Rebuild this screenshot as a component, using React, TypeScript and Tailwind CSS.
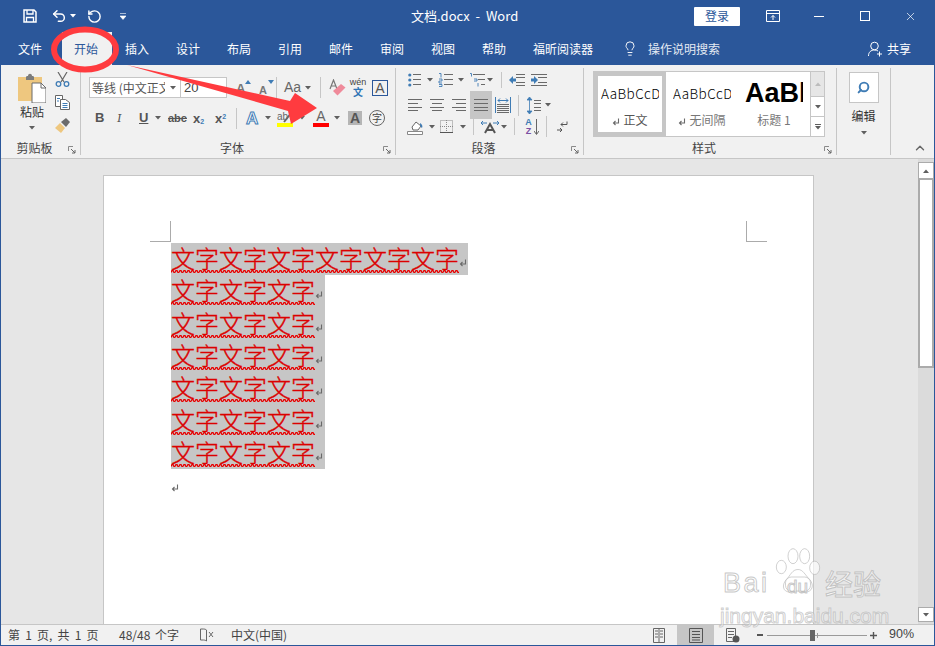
import { ChevronUp, Lightbulb, RotateCcw, Search, Undo2, X } from 'lucide-react'

const cjk = '[font-family:"Noto_Sans_CJK_SC","Liberation_Sans",sans-serif]'

const tabs = ['插入', '设计', '布局', '引用', '邮件', '审阅', '视图', '帮助']

const Caret = ({ className = '' }: { className?: string }) => (
  <svg viewBox="0 0 6 4" className={`w-[6px] h-[4px] shrink-0 ${className}`}>
    <path d="M0 0h6L3 3.5z" fill="#5f5f5f" />
  </svg>
)

const Sep = ({ className = '' }: { className?: string }) => (
  <div className={`w-px bg-[#c6c6c6] shrink-0 ${className}`} />
)

const Launcher = () => (
  <svg viewBox="0 0 8 8" className="w-[8px] h-[8px]">
    <path d="M0.5 5V0.5H5" fill="none" stroke="#8a8a8a" />
    <path d="M3 3l4 4M7 4v3H4" fill="none" stroke="#666" />
  </svg>
)

const Mark = ({ className = '' }: { className?: string }) => (
  <svg viewBox="0 0 8 8" className={`w-[8px] h-[8px] ${className}`}>
    <path d="M6.5 0.5v4.5H1.5M3.5 3L1.5 5l2 2" fill="none" stroke="#6a6a6a" strokeWidth="1.1" />
  </svg>
)

const Lines = ({ rows, x1 = 0, x2 = 14 }: { rows: number[]; x1?: number; x2?: number }) => (
  <>
    {rows.map((y) => (
      <path key={y} d={`M${x1} ${y}.5H${x2}`} stroke="#6a6a6a" />
    ))}
  </>
)

const Align = ({ kind }: { kind: 'l' | 'c' | 'r' | 'j' }) => {
  const short = kind === 'l' ? [0, 10] : kind === 'c' ? [2, 12] : kind === 'r' ? [4, 14] : [0, 14]
  return (
    <svg viewBox="0 0 14 12" className="w-[14px] h-[12px] shrink-0">
      <path d="M0 0.5H14M0 8.5H14" stroke="#6a6a6a" />
      <path d={`M${short[0]} 4.5H${short[1]}M${short[0]} 11.5H${short[1]}`} stroke="#6a6a6a" />
    </svg>
  )
}

const Group = ({
  width,
  label,
  children,
}: {
  width: string
  label: string
  children: React.ReactNode
}) => (
  <div className={`${width} shrink-0 border-r border-[#c6c6c6] flex flex-col`}>
    <div className="flex-1 min-h-0">{children}</div>
    <div className="h-[17px] flex items-center pt-[2px]">
      <div className={`flex-1 text-center text-[12px] leading-none text-[#444] ${cjk}`}>{label}</div>
      <div className="mr-[4px] mt-[5px]">
        <Launcher />
      </div>
    </div>
  </div>
)

// spell-check squiggle under a run of text
const Squiggle = ({ id }: { id: string }) => (
  <svg className="block w-full h-[3px]">
    <defs>
      <pattern id={id} width="4" height="3" patternUnits="userSpaceOnUse">
        <path d="M0 2.5L1 0.5 2 0.5 3 2.5 4 2.5" fill="none" stroke="#e80000" strokeWidth="1.3" />
      </pattern>
    </defs>
    <rect width="100%" height="3" fill={`url(#${id})`} />
  </svg>
)

const Line = ({ wide, tall, id }: { wide?: boolean; tall?: boolean; id: string }) => (
  <div className={`${wide ? 'w-[297px]' : 'w-[154px]'} ${tall ? 'h-[33px]' : 'h-[32px]'} bg-[#c6c6c6] flex items-start`}>
    <div className={`${wide ? 'w-[288px]' : 'w-[144px]'} pt-[2px]`}>
      <div className={`whitespace-nowrap text-[24px] leading-[25px] font-light text-[#dc0000] [-webkit-text-stroke:0.35px_#dc0000] ${cjk}`}>
        {wide ? '文字文字文字文字文字文字' : '文字文字文字'}
      </div>
      <Squiggle id={id} />
    </div>
    <Mark className="mt-[16px]" />
  </div>
)

export default function App() {
  return (
    <div className={`relative w-[935px] h-[646px] overflow-hidden bg-[#2b579a] px-px pb-px flex flex-col ${cjk}`}>
      {/* title bar */}
      <div className="h-[32px] flex items-center text-white shrink-0">
        <svg viewBox="0 0 14 14" className="w-[14px] h-[14px] ml-[22px]">
          <path d="M1 1h10l2 2v10H1z" fill="none" stroke="#fff" strokeWidth="1.5" />
          <path d="M4 1v4h6V1M3.5 13V8.5h7V13" fill="none" stroke="#fff" strokeWidth="1.3" />
        </svg>
        <Undo2 className="w-[16px] h-[16px] ml-[14px]" strokeWidth={2.2} />
        <svg viewBox="0 0 6 4" className="w-[6px] h-[4px] ml-[3px]">
          <path d="M0 0h6L3 3.5z" fill="#fff" />
        </svg>
        <RotateCcw className="w-[15px] h-[15px] ml-[11px]" strokeWidth={2.3} />
        <svg viewBox="0 0 6 7" className="w-[6px] h-[7px] ml-[18px]">
          <path d="M0 0.5h6M0 3h6L3 6.5z" fill="#fff" stroke="#fff" strokeWidth="0.6" />
        </svg>
        <span className="w-[108px] ml-[285px] text-[13px] whitespace-nowrap">文档.docx&nbsp; - &nbsp;Word</span>
        <div className="ml-[175px] w-[46px] h-[19px] bg-white rounded-[1px] text-[#2b579a] text-[12px] flex items-center justify-center">
          登录
        </div>
        <svg viewBox="0 0 14 12" className="w-[14px] h-[12px] ml-[26px]">
          <path d="M0.5 0.5h13v11H0.5zM0.5 3.5h13M7 10V5.5M5 7.5l2-2 2 2" fill="none" stroke="#fff" />
        </svg>
        <div className="w-[10px] h-px bg-white ml-[34px]" />
        <div className="w-[10px] h-[10px] border border-white ml-[36px]" />
        <X className="w-[13px] h-[13px] ml-[34px]" strokeWidth={1.3} />
      </div>

      {/* tabs */}
      <div className="h-[33px] flex items-center text-white text-[12px] shrink-0">
        <div className="w-[61px] pl-[17px]">文件</div>
        <div className="w-[50px] h-full bg-[#f1f1f1] text-[#2b579a] flex items-center justify-center pr-[2px]">开始</div>
        {tabs.map((t) => (
          <div key={t} className="w-[51px] pl-[13px]">
            {t}
          </div>
        ))}
        <div className="w-[102px] pl-[13px] whitespace-nowrap">福昕阅读器</div>
        <Lightbulb className="w-[16px] h-[17px]" strokeWidth={1.4} />
        <span className="ml-[10px] w-[73px] whitespace-nowrap text-[#e4eaf3]">操作说明搜索</span>
        <svg viewBox="0 0 15 16" className="w-[15px] h-[16px] ml-[147px]">
          <circle cx="6.5" cy="5" r="3.8" fill="none" stroke="#fff" />
          <path d="M0.5 15c0-4 2.5-6 6-6 1.5 0 2.5.4 3.5 1M11.5 10.5v5M9 13h5" fill="none" stroke="#fff" />
        </svg>
        <span className="ml-[4px]">共享</span>
      </div>

      {/* ribbon */}
      <div className="h-[94px] bg-[#f1f1f1] border-b border-[#c6c6c6] pt-[3px] pb-[3px] flex shrink-0 text-[#444]">
        <Group width="w-[80px]" label="剪贴板">
          <div className="flex">
            <div className="ml-[17px] w-[28px] flex flex-col items-center">
              <svg viewBox="0 0 28 30" className="w-[28px] h-[30px] mt-[5px]">
                <path d="M0 4h24v24H0z" fill="#eec77f" />
                <path d="M8 4c0-1 1-1 2-1 0-3 4-3 4 0 1 0 2 0 2 1v3H8z" fill="#7c7c7c" />
                <path d="M14 10h9l5 5v15H14z" fill="#fff" stroke="#6a6a6a" />
                <path d="M23 10v5h5" fill="none" stroke="#6a6a6a" />
              </svg>
              <span className="text-[12px] leading-none mt-[3px] whitespace-nowrap text-[#333]">粘贴</span>
              <Caret className="mt-[8px]" />
            </div>
            <div className="ml-[9px] flex flex-col items-center">
              <svg viewBox="0 0 15 15" className="w-[15px] h-[15px] mt-[4px]">
                <path d="M3 0l6 10M12 0L6 10" stroke="#666" strokeWidth="1.2" />
                <circle cx="3.5" cy="12" r="2.3" fill="none" stroke="#3f7cb5" strokeWidth="1.3" />
                <circle cx="11.5" cy="12" r="2.3" fill="none" stroke="#3f7cb5" strokeWidth="1.3" />
              </svg>
              <svg viewBox="0 0 15 15" className="w-[15px] h-[15px] mt-[8px]">
                <path d="M0.5 0.5h7v11h-7z" fill="#fff" stroke="#666" />
                <path d="M5.5 4.5h5l4 3v7h-9z" fill="#fff" stroke="#666" />
                <path d="M2 3.5h3M2 6h2M7.5 8.5h5M7.5 10.5h5M7.5 12.5h5" stroke="#3f7cb5" />
              </svg>
              <svg viewBox="0 0 15 15" className="w-[15px] h-[15px] mt-[8px]">
                <path d="M0 10l5-5 5 5-4 5z" fill="#eec77f" />
                <path d="M6 4l5-4 4 4-4 5z" fill="#6b6b6b" />
              </svg>
            </div>
          </div>
        </Group>

        <Group width="w-[315px]" label="字体">
          <div className="flex items-center mt-[9px] h-[21px]">
            <div className="ml-[8px] w-[92px] h-[21px] bg-white border border-[#c6c6c6] flex items-center pl-[2px] text-[12px] overflow-hidden">
              <span className="w-[73px] overflow-hidden whitespace-nowrap text-[#555]">等线 (中文正文)</span>
              <Caret className="ml-[5px]" />
            </div>
            <div className="w-[46px] h-[21px] bg-white border border-l-0 border-[#c6c6c6] text-[13px] pl-[3px] leading-[19px] [font-family:'Liberation_Sans',sans-serif]">
              20
            </div>
            <div className="ml-[9px] w-[13px] h-[16px] relative text-[13px] leading-[18px] font-semibold text-[#777] [font-family:'Liberation_Sans',sans-serif]">
              A
              <svg viewBox="0 0 6 4" className="w-[6px] h-[4px] absolute right-[-2px] top-0">
                <path d="M0 4h6L3 0z" fill="#3f7cb5" />
              </svg>
            </div>
            <div className="ml-[10px] w-[13px] h-[16px] relative text-[11px] leading-[20px] font-semibold text-[#777] [font-family:'Liberation_Sans',sans-serif]">
              A
              <svg viewBox="0 0 6 4" className="w-[6px] h-[4px] absolute right-[-2px] top-0">
                <path d="M0 0h6L3 4z" fill="#3f7cb5" />
              </svg>
            </div>
            <Sep className="h-[21px] ml-[4px]" />
            <span className="ml-[7px] w-[16px] text-[14px] text-[#666] [font-family:'Liberation_Sans',sans-serif]">Aa</span>
            <Caret className="ml-[5px]" />
            <Sep className="h-[21px] ml-[9px]" />
            <svg viewBox="0 0 17 17" className="w-[17px] h-[17px] ml-[8px]">
              <path d="M1 10L4.5 1 8 10M2.5 7h4" fill="none" stroke="#777" strokeWidth="1.2" />
              <path d="M4 12l8-7 4.5 3.5-8 8z" fill="#ef8a9a" />
            </svg>
            <div className="ml-[4px] w-[16px] flex flex-col items-center text-[#444]">
              <span className="text-[9px] leading-[9px] [font-family:'Liberation_Sans',sans-serif]">wén</span>
              <span className="text-[10px] leading-[10px] text-[#2e75b5] font-bold">文</span>
            </div>
            <div className="ml-[6px] w-[16px] h-[16px] border border-[#2b579a] text-[14px] leading-[14px] text-center text-[#555] font-medium [font-family:'Liberation_Sans',sans-serif]">
              A
            </div>
          </div>
          <div className="flex items-center mt-[8px] h-[24px] text-[13px] text-[#555] [font-family:'Liberation_Sans',sans-serif]">
            <span className="ml-[14px] w-[9px] font-bold">B</span>
            <span className="ml-[13px] w-[9px] italic font-serif">I</span>
            <span className="ml-[13px] w-[9px] font-bold underline">U</span>
            <Caret className="ml-[7px]" />
            <span className="ml-[7px] w-[18px] text-[11px] font-semibold line-through">abc</span>
            <span className="ml-[7px] w-[13px] font-bold leading-none">
              x<sub className="text-[#3f7cb5] text-[7px]">2</sub>
            </span>
            <span className="ml-[9px] w-[13px] font-bold leading-none">
              x<sup className="text-[#3f7cb5] text-[7px]">2</sup>
            </span>
            <Sep className="h-[21px] ml-[8px]" />
            <span className="ml-[9px] w-[14px] text-[17px] leading-none font-bold text-white [-webkit-text-stroke:1px_#3f7cb5]">A</span>
            <Caret className="ml-[5px]" />
            <div className="relative ml-[6px] w-[16px] flex flex-col items-center">
              <span className="text-[10px] leading-[13px] text-[#666] self-start">ab</span>
              <div className="w-[16px] h-[4px] bg-[#ffff00]" />
              <svg viewBox="0 0 10 12" className="absolute right-[0px] top-[1px] w-[10px] h-[12px]">
                <path d="M1 11L9 1" stroke="#666" strokeWidth="2" />
              </svg>
            </div>
            <Caret className="ml-[6px]" />
            <div className="ml-[8px] w-[16px] flex flex-col items-center">
              <span className="text-[14px] leading-[13px] font-medium text-[#666]">A</span>
              <div className="w-[16px] h-[4px] bg-[#ff0000]" />
            </div>
            <Caret className="ml-[5px]" />
            <div className="ml-[8px] w-[14px] h-[14px] bg-[#b5b5b5] text-[14px] leading-[14px] text-center font-bold text-[#555]">A</div>
            <div className={`ml-[7px] w-[16px] h-[16px] rounded-full border border-[#666] text-[10px] leading-[14px] text-center text-[#444] ${cjk}`}>字</div>
          </div>
        </Group>

        <Group width="w-[188px]" label="段落">
          <div className="flex items-center mt-[3px] h-[17px] pl-[12px]">
            <svg viewBox="0 0 13 14" className="w-[13px] h-[14px]">
              <circle cx="1.8" cy="2" r="1.6" fill="#3f7cb5" />
              <circle cx="1.8" cy="7" r="1.6" fill="#3f7cb5" />
              <circle cx="1.8" cy="12" r="1.6" fill="#3f7cb5" />
              <Lines rows={[1, 6, 11]} x1={5} x2={13} />
            </svg>
            <Caret className="ml-[6px]" />
            <svg viewBox="0 0 15 14" className="w-[15px] h-[14px] ml-[5px]">
              <path d="M1 0.5h2v4M1 6h3v2H1v2h3M1 11.5h3v2H1" fill="none" stroke="#3f7cb5" strokeWidth="0.9" />
              <Lines rows={[1, 6, 11]} x1={6} x2={15} />
            </svg>
            <Caret className="ml-[5px]" />
            <svg viewBox="0 0 16 14" className="w-[16px] h-[14px] ml-[5px]">
              <path d="M1 0.5h1.5v3M5 6h3v2H5M9 10v3.5" fill="none" stroke="#3f7cb5" strokeWidth="0.9" />
              <path d="M4 1.5H16M9 6.5H16M12 11.5H16" stroke="#6a6a6a" />
            </svg>
            <Caret className="ml-[2px]" />
            <Sep className="h-[16px] ml-[8px]" />
            <svg viewBox="0 0 16 12" className="w-[16px] h-[12px] ml-[7px]">
              <path d="M7 0.5H16M7 3.5H16M7 8.5H16M7 11.5H16" stroke="#6a6a6a" />
              <path d="M0 6l4-4v2.5h3v3H4V10z" fill="#3f7cb5" />
            </svg>
            <svg viewBox="0 0 16 12" className="w-[16px] h-[12px] ml-[6px]">
              <path d="M0 0.5H16M7 3.5H16M7 8.5H16M0 11.5H16" stroke="#6a6a6a" />
              <path d="M7 6L3 2v2.5H0v3h3V10z" fill="#3f7cb5" />
            </svg>
          </div>
          <div className="flex items-center mt-[3px] h-[28px] pl-[12px]">
            <Align kind="l" />
            <div className="ml-[8px]">
              <Align kind="c" />
            </div>
            <div className="ml-[8px]">
              <Align kind="r" />
            </div>
            <div className="ml-[4px] w-[22px] h-[28px] bg-[#c6c6c6] flex items-center justify-center">
              <Align kind="j" />
            </div>
            <svg viewBox="0 0 16 16" className="w-[16px] h-[16px] ml-[3px]">
              <path d="M0.5 0v16M15.5 0v16" stroke="#3f7cb5" />
              <path d="M3 3.5h10M3 3.5l2-2M3 3.5l2 2M13 3.5l-2-2M13 3.5l-2 2" stroke="#3f7cb5" fill="none" />
              <Lines rows={[7, 9, 11, 13, 15]} x1={2} x2={14} />
            </svg>
            <Sep className="h-[21px] ml-[7px]" />
            <svg viewBox="0 0 14 17" className="w-[14px] h-[17px] ml-[8px]">
              <path d="M2.5 0l-2.5 3h5zM2.5 17l-2.5-3h5zM2.5 3v11" fill="#3f7cb5" stroke="#3f7cb5" strokeWidth="0.8" />
              <Lines rows={[3, 6, 10, 13]} x1={7} x2={14} />
            </svg>
            <Caret className="ml-[4px]" />
          </div>
          <div className="flex items-center mt-[-4px] h-[23px] pl-[11px]">
            <svg viewBox="0 0 17 17" className="w-[17px] h-[17px]">
              <path d="M5 9l4-5 5 4-3 4H6z" fill="#fff" stroke="#666" />
              <path d="M13 5c2 1 3 3 2 5-2-1-2-3-2-5z" fill="#3f7cb5" />
              <path d="M0.5 13.5h15v3h-15z" fill="#fff" stroke="#888" />
            </svg>
            <Caret className="ml-[5px]" />
            <svg viewBox="0 0 13 13" className="w-[13px] h-[13px] ml-[5px]">
              <path d="M0.5 0.5h12v12h-12zM6.5 0v13M0 6.5h13" fill="none" stroke="#888" strokeDasharray="1 1" />
              <path d="M0 12.5h13" stroke="#555" />
            </svg>
            <Caret className="ml-[7px]" />
            <Sep className="h-[17px] ml-[7px]" />
            <svg viewBox="0 0 18 14" className="w-[18px] h-[14px] ml-[7px]">
              <path d="M4 13L9 4l5 9M6 10h6" fill="none" stroke="#555" strokeWidth="2" />
              <path d="M0 3h6M0 3l2-2M0 3l2 2M18 3h-6M18 3l-2-2M18 3l-2 2" fill="none" stroke="#3f7cb5" />
            </svg>
            <Caret className="ml-[2px]" />
            <Sep className="h-[17px] ml-[7px]" />
            <div className="ml-[9px] w-[9px] flex flex-col items-center text-[9px] leading-[9px] font-bold [font-family:'Liberation_Sans',sans-serif]">
              <span className="text-[#3f7cb5]">A</span>
              <span className="text-[#7b4fa3]">Z</span>
            </div>
            <svg viewBox="0 0 5 16" className="w-[5px] h-[16px] ml-[1px]">
              <path d="M2.5 0v15M0 12l2.5 3.5L5 12" fill="none" stroke="#666" />
            </svg>
            <Sep className="h-[21px] ml-[7px]" />
            <svg viewBox="0 0 11 12" className="w-[11px] h-[12px] ml-[10px]">
              <path d="M10 0.5v3H4M6 1.5L4 3.5l2 2M0 9h5M3 7l2 2-2 2" fill="none" stroke="#555" />
            </svg>
          </div>
        </Group>

        <Group width="w-[253px]" label="样式">
          <div className="mt-[3px] ml-[9px] w-[232px] h-[66px] bg-white border border-[#c6c6c6] flex">
            <div className="w-[72px] h-full border-[4px] border-[#c6c6c6] flex flex-col items-center">
              <div className="w-[58px] h-[34px] overflow-hidden whitespace-nowrap text-[13.5px] font-light tracking-[0.4px] leading-[34px] text-black">AaBbCcDd</div>
              <div className="text-[12px] leading-[20px] flex items-center text-[#555]">
                <Mark className="mr-[3px] mt-[3px]" />
                正文
              </div>
            </div>
            <div className="w-[72px] h-full pt-[4px] flex flex-col items-center">
              <div className="w-[58px] h-[34px] overflow-hidden whitespace-nowrap text-[13.5px] font-light tracking-[0.4px] leading-[34px] text-black">AaBbCcDd</div>
              <div className="text-[12px] leading-[20px] flex items-center text-[#777]">
                <Mark className="mr-[3px] mt-[3px]" />
                无间隔
              </div>
            </div>
            <div className="w-[72px] h-full pt-[4px] flex flex-col items-center">
              <div className="w-[58px] h-[34px] overflow-hidden whitespace-nowrap text-[27px] font-bold leading-[34px] text-black [font-family:'Liberation_Sans',sans-serif]">AaBbCc</div>
              <div className="text-[12px] leading-[20px] text-[#777] mt-[0px]">标题 1</div>
            </div>
            <div className="ml-auto w-[14px] flex flex-col border-l border-[#c6c6c6]">
              <div className="h-[24px] bg-[#e6e6e6] flex items-center justify-center">
                <Caret className="rotate-180 opacity-30" />
              </div>
              <div className="h-[20px] border-t border-[#c6c6c6] flex items-center justify-center">
                <Caret />
              </div>
              <div className="flex-1 border-t border-[#c6c6c6] flex flex-col items-center justify-center">
                <div className="w-[6px] h-px bg-[#5f5f5f] mb-px" />
                <Caret />
              </div>
            </div>
          </div>
        </Group>

        <div className="w-[54px] shrink-0 border-r border-[#c6c6c6] flex flex-col items-center">
          <div className="mt-[4px] w-[30px] h-[31px] bg-white border border-[#c6c6c6] flex items-center justify-center">
            <Search className="w-[13px] h-[13px] text-[#3f7cb5] -scale-x-100" strokeWidth={3.6} />
          </div>
          <span className="text-[12px] leading-none mt-[7px] text-[#333]">编辑</span>
          <Caret className="mt-[9px]" />
        </div>
        <div className="flex-1 flex items-end justify-end pr-[7px]">
          <ChevronUp className="w-[14px] h-[14px] text-[#666]" strokeWidth={2.4} />
        </div>
      </div>

      {/* document */}
      <div className="flex-1 min-h-0 flex bg-[#e6e6e6] overflow-hidden">
        <div className="flex-1 pl-[102px] pt-[16px] h-full">
          <div className="w-[711px] h-full bg-white border border-b-0 border-[#c6c6c6] pt-[45px] px-[46px]">
            <div className="flex justify-between">
              <div className="w-[21px] h-[21px] border-r border-b border-[#ababab]" />
              <div className="w-[21px] h-[21px] border-l border-b border-[#ababab]" />
            </div>
            <div className="ml-[21px] mt-[1px]">
              <Line wide id="sq0" />
              <Line tall id="sq1" />
              <Line id="sq2" />
              <Line id="sq3" />
              <Line tall id="sq4" />
              <Line id="sq5" />
              <Line id="sq6" />
              <Mark className="mt-[15px]" />
            </div>
          </div>
        </div>
        <div className="w-[16px] h-full bg-[#dbdbdb] flex flex-col pt-[3px] pb-[2px]">
          <div className="h-[16px] bg-white border border-[#ababab] border-b-0 flex items-center justify-center">
            <Caret className="rotate-180" />
          </div>
          <div className="h-[190px] bg-white border-2 border-[#ababab]" />
          <div className="mt-auto h-[15px] bg-white border border-[#ababab] flex items-center justify-center">
            <Caret />
          </div>
        </div>
      </div>

      {/* status bar */}
      <div className="h-[21px] bg-[#f1f1f1] border-t border-[#c6c6c6] flex items-center text-[12px] text-[#444] shrink-0">
        <span className="ml-[7px] w-[92px] pb-[1px] whitespace-nowrap [word-spacing:2.5px]">第 1 页, 共 1 页</span>
        <span className="ml-[19px] w-[62px] pb-[1px] whitespace-nowrap [word-spacing:2px]">48/48 个字</span>
        <svg viewBox="0 0 14 14" className="w-[14px] h-[14px] ml-[19px]">
          <path d="M0.5 1h3c2 0 3 1 3 1v11s-1-1-3-1h-3zM6.5 2v11" fill="none" stroke="#666" />
          <path d="M9 4l4 5M13 4l-4 5" stroke="#666" />
        </svg>
        <span className="ml-[17px] w-[56px] pb-[1px] whitespace-nowrap">中文(中国)</span>
        <svg viewBox="0 0 12 15" className="w-[12px] h-[15px] ml-[366px]">
          <path d="M0.5 0.5h11v14h-11zM6 0v15" fill="none" stroke="#666" />
          <path d="M2 3h3M2 6h3M2 9h3M7 3h3M7 6h3M7 9h3" stroke="#666" />
        </svg>
        <div className="ml-[12px] w-[37px] h-full bg-[#c6c6c6] flex items-center justify-center">
          <svg viewBox="0 0 14 15" className="w-[14px] h-[15px]">
            <path d="M0.5 0.5h13v14h-13z" fill="none" stroke="#555" />
            <path d="M3 3.5h8M3 6.5h8M3 9.5h8M3 12h8" stroke="#555" />
          </svg>
        </div>
        <svg viewBox="0 0 14 15" className="w-[14px] h-[15px] ml-[12px]">
          <path d="M0.5 0.5h9v13h-9z" fill="none" stroke="#666" />
          <path d="M2 3.5h6M2 6.5h6M2 9.5h4" stroke="#666" />
          <circle cx="10" cy="11" r="3.5" fill="#555" />
        </svg>
        <div className="w-[6px] h-[2px] bg-[#555] ml-[17px]" />
        <div className="ml-[4px] w-[100px] h-px bg-[#9a9a9a] flex items-center">
          <div className="ml-[43px] w-[5px] h-[11px] bg-[#666] shrink-0" />
          <div className="ml-[2px] w-px h-[5px] bg-[#9a9a9a] shrink-0" />
        </div>
        <svg viewBox="0 0 7 7" className="w-[7px] h-[7px] ml-[3px]">
          <path d="M3.5 0v7M0 3.5h7" stroke="#555" strokeWidth="1.4" />
        </svg>
        <span className="ml-[12px] pb-[1px] [font-family:'Liberation_Sans',sans-serif] text-[12.5px]">90%</span>
      </div>

      {/* annotation on top of the screenshot */}
      <svg viewBox="0 0 935 646" className="absolute inset-0 w-[935px] h-[646px] pointer-events-none">
        <ellipse cx="85" cy="49.5" rx="31" ry="20" fill="none" stroke="#ff3b3f" strokeWidth="6" />
        <path d="M127 65L290 101 295 93 317 108 291 124 288 111z" fill="#ff3b3f" />
      </svg>

      {/* watermark */}
      <div className="absolute left-[720px] top-[546px] w-[170px] h-[90px] pointer-events-none">
        <svg viewBox="0 0 60 60" className="absolute left-[53px] top-[1px] w-[50px] h-[50px]">
          <g fill="rgba(255,255,255,.65)" stroke="rgba(175,175,175,.7)">
            <ellipse cx="10" cy="24" rx="6" ry="8" />
            <ellipse cx="24" cy="11" rx="6" ry="9" />
            <ellipse cx="38" cy="11" rx="6" ry="9" />
            <ellipse cx="50" cy="25" rx="6" ry="8" />
            <path d="M30 27c6 0 8 6 14 12 6 7 3 15-5 15-4 0-6-2-9-2s-6 2-10 2c-8 0-10-8-4-15 5-5 7-12 14-12z" />
            <rect x="15" y="36" width="30" height="17" rx="7" />
          </g>
        </svg>
        <div className="absolute left-[3px] top-[24px] text-[27px] leading-none tracking-[2.5px] text-white/70 [-webkit-text-stroke:1px_rgba(175,175,175,.7)] [font-family:'Liberation_Sans',sans-serif]">
          Bai
        </div>
        <div className="absolute left-[67px] top-[31px] text-[19px] leading-none text-white/70 [-webkit-text-stroke:1px_rgba(175,175,175,.7)] [font-family:'Liberation_Sans',sans-serif]">
          du
        </div>
        <div className={`absolute left-[105px] top-[23px] text-[28px] leading-none text-white/70 [-webkit-text-stroke:1px_rgba(175,175,175,.7)] ${cjk}`}>
          经验
        </div>
        <div className="absolute left-[0px] top-[59px] text-[21px] leading-none whitespace-nowrap text-white/60 [-webkit-text-stroke:1px_rgba(175,175,175,.6)] [font-family:'Liberation_Sans',sans-serif]">
          jingyan.baidu.com
        </div>
      </div>
    </div>
  )
}
